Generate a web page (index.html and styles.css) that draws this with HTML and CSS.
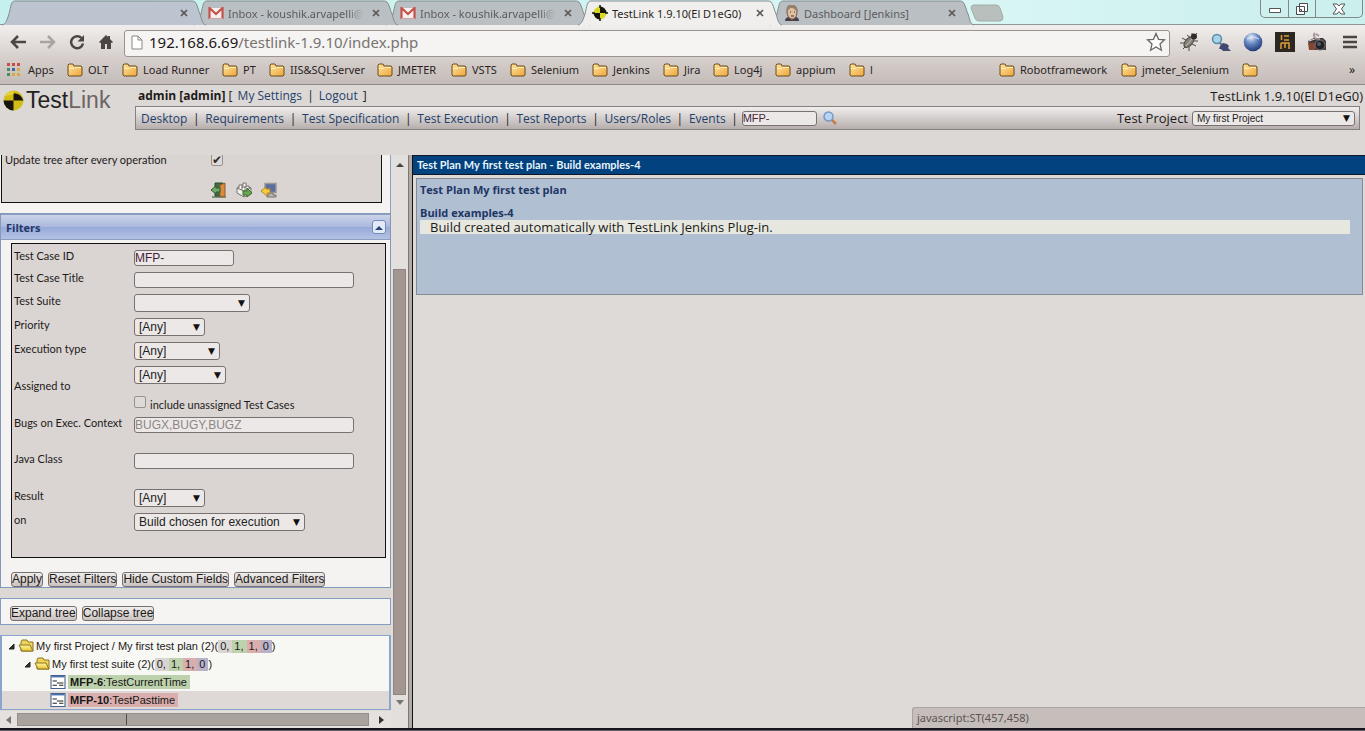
FILE: index.html
```html
<!DOCTYPE html>
<html lang="en">
<head>
<meta charset="utf-8">
<meta name="viewport" content="width=device-width, initial-scale=1">
<title>TestLink 1.9.10(El D1eG0)</title>
<link rel="stylesheet" href="styles.css">
</head>
<body>
<svg class="defs" width="0" height="0" aria-hidden="true">
  <defs>
    <linearGradient id="folderFill" x1="0" y1="0" x2="1" y2="1"><stop offset="0" stop-color="#ffe49a"/><stop offset="1" stop-color="#eea63c"/></linearGradient>
    <radialGradient id="globeFill" cx=".4" cy=".25" r=".8"><stop offset="0" stop-color="#e5effa"/><stop offset=".45" stop-color="#6687c0"/><stop offset="1" stop-color="#18306f"/></radialGradient>
    <linearGradient id="treeFill" x1="0" y1="0" x2="0" y2="1"><stop offset="0" stop-color="#fff5a0"/><stop offset="1" stop-color="#e8c52e"/></linearGradient>
    <symbol id="folder" viewBox="0 0 16 14"><path d="M1 12V2l1-1h4l1 2h7l1 1V12l-1 1H2z" fill="url(#folderFill)" stroke="#6b4a1d"/><path d="M2 5.500h5l1-1h6" stroke="#fff0bb" fill="none"/></symbol>
    <symbol id="tabshape" viewBox="0 0 204 26"><path d="M0 25C4 24 5 20 7 14C9 6 9 1 13 1H190C195 1 195 7 198 14C200 20 200 24 204 25"/></symbol>
    <symbol id="close" viewBox="0 0 8 8"><path d="M1 1l6 6M7 1L1 7" stroke="#5b5553" stroke-width="1.700" fill="none"/></symbol>
    <symbol id="mail" viewBox="0 0 16 12"><path d="M1 1h14v10H1z" fill="#f6efed"/><path d="M1.500 12V1L8 7l6.500-6v11" fill="none" stroke="#c5524a" stroke-width="2.200"/><path d="M1 11.500h14" stroke="#c9a5a0"/></symbol>
    <symbol id="favtarget" viewBox="0 0 16 16"><circle cx="8" cy="8" r="6.500" fill="#d8d91e"/><path d="M8 8V1.500A6.500 6.500 0 0 1 14.500 8zM8 8v6.500A6.500 6.500 0 0 1 1.500 8z" fill="#15130e"/><path d="M8 0v3M8 13v3M0 8h3M13 8h3" stroke="#15130e" stroke-width="1.500"/></symbol>
    <symbol id="logotarget" viewBox="0 0 20 20"><circle cx="10" cy="10" r="9.500" fill="#d2bd16"/><path d="M10 10H.5A9.500 9.500 0 0 0 10 19.500z" fill="#17140e"/><path d="M10 10V3q7 0 9.500 7z" fill="#17140e"/><path d="M10 1q-6 0-8 5l8-2z" fill="#e6d334"/></symbol>
    <symbol id="treefolder" viewBox="0 0 16 14"><path d="M3 12V3l1-2h5l1 2h5v9z" fill="#eed45b" stroke="#8c7422"/><path d="M1 6h11l3 6H4z" fill="url(#treeFill)" stroke="#8c7422"/></symbol>
    <symbol id="testcase" viewBox="0 0 14 13"><path d="M.5.5h13v12H.5z" fill="#fff" stroke="#45608f"/><path d="M1 1.500h12" stroke="#4c71ad" stroke-width="1.500"/><path d="M2 5.500h4M6 7.500h6M2 9.500h4M8 9.500h4" stroke="#222"/></symbol>
    <symbol id="expanded" viewBox="0 0 8 8"><path d="M7 2v5H2z" fill="#333" stroke="#222"/></symbol>
  </defs>
</svg>

<header class="browser">
  <div class="tabstrip">
    <div class="tab tab-1"><svg class="tab-bg"><use href="#tabshape"/></svg><span class="tab-title"></span><button class="tab-close" aria-label="Close tab"><svg><use href="#close"/></svg></button></div>
    <div class="tab tab-2"><svg class="tab-bg"><use href="#tabshape"/></svg><svg class="favicon mail"><use href="#mail"/></svg><span class="tab-title fade">Inbox - koushik.arvapelli@</span><button class="tab-close" aria-label="Close tab"><svg><use href="#close"/></svg></button></div>
    <div class="tab tab-3"><svg class="tab-bg"><use href="#tabshape"/></svg><svg class="favicon mail"><use href="#mail"/></svg><span class="tab-title fade">Inbox - koushik.arvapelli@</span><button class="tab-close" aria-label="Close tab"><svg><use href="#close"/></svg></button></div>
    <div class="tab tab-active"><svg class="tab-bg"><use href="#tabshape"/></svg><svg class="favicon"><use href="#favtarget"/></svg><span class="tab-title">TestLink 1.9.10(El D1eG0)</span><button class="tab-close" aria-label="Close tab"><svg><use href="#close"/></svg></button></div>
    <div class="tab tab-5"><svg class="tab-bg"><use href="#tabshape"/></svg><svg class="favicon" viewBox="0 0 16 16"><path d="M1 16c0-3 2-4 4-4l5-1c3 1 5 2 5 5z" fill="#45404a"/><path d="M5 11l3 4 3-4z" fill="#f0eeea"/><path d="M7 13l1 3 2-3z" fill="#a94437"/><path d="M3 6c0-8 10-8 10 0 0 7-3 8-5 8S3 12 3 6z" fill="#dfbea1" stroke="#70553e"/><path d="M3 7C1 0 6-1 9 1c3-1 5 2 4 5-2 0-2-3-5-3S5 5 3 7z" fill="#97816b"/><path d="M6 7h1M10 7h1M7 11h3" stroke="#443630"/></svg><span class="tab-title">Dashboard [Jenkins]</span><button class="tab-close" aria-label="Close tab"><svg><use href="#close"/></svg></button></div>
    <button class="newtab" aria-label="New tab"><svg viewBox="0 0 34 18"><path d="M1 4q0-3 3-3h22q3 0 4 3l3 9q0 4-3 4H9q-3 0-4-3z" fill="#b8bfbd" stroke="#a2aca9"/></svg></button>
    <div class="window-buttons">
      <button aria-label="Minimize"><svg width="14" height="10"><path d="M1.500 4.500h11v4h-11z" fill="#fff" stroke="#555"/></svg></button>
      <button aria-label="Restore"><svg width="14" height="14"><path d="M4.500 1.500h8v8h-8zM1.500 4.500h8v8h-8z" fill="#fff" stroke="#4c4c4c"/><path d="M4.500 7.500h2v2h-2z" fill="#ddd" stroke="#4c4c4c"/></svg></button>
      <button aria-label="Close"><svg width="14" height="12"><path d="M1 1h4l2 2 2-2h4L9.500 6l3.500 5H9L7 8.500 5 11H1l3.500-5z" fill="#fff" stroke="#555"/></svg></button>
    </div>
  </div>

  <div class="toolbar">
    <button class="nav-btn" aria-label="Back"><svg width="18" height="16"><path d="M17 8H3M9 2L3 8l6 6" fill="none" stroke="#4c4543" stroke-width="2.500"/></svg></button>
    <button class="nav-btn" aria-label="Forward"><svg width="18" height="16"><path d="M1 8h14M9 2l6 6-6 6" fill="none" stroke="#aaa3a0" stroke-width="2.500"/></svg></button>
    <button class="nav-btn" aria-label="Reload"><svg width="16" height="16"><path d="M12.500 4A6 6 0 1 0 14 9.500" fill="none" stroke="#4c4543" stroke-width="2.500"/><path d="M15 1v6.500H8.500z" fill="#4c4543"/></svg></button>
    <button class="nav-btn" aria-label="Home"><svg width="16" height="16"><path d="M8 1L1 8l1 1 1-.5V15h4v-5h2v5h4V8.500l1 .5 1-1-3-3V2h-2v1z" fill="#4c4543"/></svg></button>
    <div class="address">
      <svg class="page-icon" viewBox="0 0 12 15"><path d="M1 1h6l4 4v9H1zM7 1v4h4" fill="#fff" stroke="#8b8583"/></svg>
      <span class="url"><b>192.168.6.69</b>/testlink-1.9.10/index.php</span>
      <button class="star" aria-label="Bookmark this page"><svg width="20" height="20" viewBox="0 0 20 20"><path d="M10 1.500l2.500 5.800 6 .5-4.500 4.200 1.400 6.200L10 15l-5.400 3.200L6 12 1.500 7.800l6-.5z" fill="#fff" stroke="#6b6563" stroke-width="1.300"/></svg></button>
    </div>
    <div class="extensions">
      <button aria-label="Bug extension"><svg viewBox="0 0 20 20"><g stroke="#4e4946" fill="none"><path d="M7 8L3 6M6 11H1M7 14l-3 3M10 15v4M13 12l4 2M12 6L8 3M14 9l5 0M15 5l3-4M13 4V1"/></g><ellipse cx="10" cy="10" rx="3.500" ry="6.500" transform="rotate(42 10 10)" fill="#85817b" stroke="#4f4a45"/><circle cx="15" cy="4.500" r="3" fill="#302c2b"/><path d="M13 7l-6 7" stroke="#c4bfb8"/></svg></button>
      <button aria-label="Search extension"><svg viewBox="0 0 20 20"><path d="M8 10l4 4" stroke="#6d7189" stroke-width="2"/><circle cx="6" cy="7" r="4.500" fill="#a9d2e6" stroke="#568ba9" stroke-width="1.500"/><path d="M9 14l3-3 4 1 2 2-1 2 3 3h-8l-2-2H8z" fill="#414970"/></svg></button>
      <button aria-label="Globe extension"><svg viewBox="0 0 20 20"><circle cx="10" cy="10" r="9.300" fill="url(#globeFill)"/><path d="M4 7q6-4 12 0" stroke="#dce8f8" fill="none"/></svg></button>
      <button aria-label="Grid extension"><svg viewBox="0 0 20 20"><path d="M0 0h20v20H0z" fill="#2d2721"/><path d="M6.500 3v5M9 4h5M9 8h5M6 17v-6M6 11h8v6M10 11v5" stroke="#d99e36" stroke-width="1.500" fill="none"/></svg></button>
      <button aria-label="Camera extension"><svg viewBox="0 0 20 20"><path d="M8 1q-2 2 0 5M9 2l3 2" stroke="#a5999d" stroke-width="2" fill="none"/><path d="M1 9l6-3h9l3 3v9H3z" fill="#443b3c"/><path d="M1 11h7v7H2z" fill="#854731"/><circle cx="13" cy="13" r="5" fill="#222" stroke="#77717a"/><circle cx="12" cy="12" r="2" fill="#555b6b"/><path d="M2 9l6-2h5" stroke="#ddd3cf"/></svg></button>
      <button class="menu" aria-label="Menu"><svg viewBox="0 0 14 14"><path d="M0 2h14M0 7h14M0 12h14" stroke="#4c4543" stroke-width="2.600"/></svg></button>
    </div>
  </div>

  <nav class="bookmarks" aria-label="Bookmarks">
    <a href="#"><svg class="apps" viewBox="0 0 14 14"><path d="M0 0h3v3H0zM5 0h3v3H5zM10 0h3v3h-3z" fill="#c74c46"/><path d="M0 5h3v3H0z" fill="#448c65"/><path d="M5 5h3v3H5z" fill="#3f65ad"/><path d="M10 5h3v3h-3zM5 10h3v3H5z" fill="#dca83c"/><path d="M0 10h3v3H0z" fill="#448c65"/><path d="M10 10h3v3h-3z" fill="#dca83c"/></svg>Apps</a>
    <a href="#"><svg><use href="#folder"/></svg>OLT</a>
    <a href="#"><svg><use href="#folder"/></svg>Load Runner</a>
    <a href="#"><svg><use href="#folder"/></svg>PT</a>
    <a href="#"><svg><use href="#folder"/></svg>IIS&amp;SQLServer</a>
    <a href="#"><svg><use href="#folder"/></svg>JMETER</a>
    <a href="#"><svg><use href="#folder"/></svg>VSTS</a>
    <a href="#"><svg><use href="#folder"/></svg>Selenium</a>
    <a href="#"><svg><use href="#folder"/></svg>Jenkins</a>
    <a href="#"><svg><use href="#folder"/></svg>Jira</a>
    <a href="#"><svg><use href="#folder"/></svg>Log4j</a>
    <a href="#"><svg><use href="#folder"/></svg>appium</a>
    <a href="#"><svg><use href="#folder"/></svg>l</a>
    <a href="#"><svg><use href="#folder"/></svg>Robotframework</a>
    <a href="#"><svg><use href="#folder"/></svg>jmeter_Selenium</a>
    <a href="#" aria-label="Folder"><svg><use href="#folder"/></svg></a>
    <button class="more" aria-label="More bookmarks">»</button>
  </nav>
</header>

<section class="app-header">
  <a class="logo" href="#" aria-label="TestLink"><svg><use href="#logotarget"/></svg><span>Test<i>Link</i></span></a>
  <div class="header-main">
    <div class="user-row"><span><b>admin [admin]</b> [ <a href="#">My Settings</a> | <a href="#">Logout</a> ]</span><span class="version">TestLink 1.9.10(El D1eG0)</span></div>
    <div class="menu-row">
      <nav class="main-menu"><a href="#">Desktop</a><i>|</i><a href="#">Requirements</a><i>|</i><a href="#">Test Specification</a><i>|</i><a href="#">Test Execution</a><i>|</i><a href="#">Test Reports</a><i>|</i><a href="#">Users/Roles</a><i>|</i><a href="#">Events</a><i>|</i></nav>
      <input class="quick" type="text" value="MFP-" aria-label="Test case quick search">
      <button class="search" aria-label="Search"><svg viewBox="0 0 14 14"><path d="M8 8l5 5" stroke="#c77d49" stroke-width="2.500"/><circle cx="5.500" cy="5.500" r="4.500" fill="#b5d5f4" stroke="#7898c3" stroke-width="1.500"/></svg></button>
      <label class="project-label" for="project">Test Project</label>
      <span class="select project"><select id="project"><option>My first Project</option></select></span>
    </div>
  </div>
</section>

<main class="workspace">
  <div class="sidebar">
    <section class="settings">
      <div class="settings-box">
        <div class="update-row"><label for="update">Update tree after every operation</label><input id="update" type="checkbox" checked></div>
        <div class="tools">
          <button aria-label="Exit"><svg viewBox="0 0 16 16"><path d="M1 15h14M4 1h8v13H4z" fill="#426c45" stroke="#29482f"/><path d="M9 3l5-2v13l-5 1z" fill="#d98c40" stroke="#955b27"/><path d="M0 8l5-4v2h4v4H5v2z" fill="#73aa68" stroke="#305d32"/></svg></button>
          <button aria-label="Export plan"><svg viewBox="0 0 16 16"><path d="M1 6l5-3 9 3v6l-7 3-7-4z" fill="#f2f0ee" stroke="#77716d"/><path d="M1 6l7 3 7-3M8 9v6" fill="none" stroke="#77716d"/><path d="M3 6V3h3v3M7 4V1h3v3M10 6V4h3v2M6 8V5h3v3" fill="#fff" stroke="#77716d"/><path d="M7 9h4V6l5 5-5 4v-2H7z" fill="#69a64d" stroke="#376c2b"/></svg></button>
          <button aria-label="Import results"><svg viewBox="0 0 16 16"><path d="M4 1.500h11v9H4z" fill="#5c6e9d" stroke="#9a9896" stroke-width="1.500"/><path d="M8 11h4v2h3v2H6v-2h2z" fill="#b8b5b2" stroke="#77716d"/><path d="M0 9l5-4v2h4v4H6v3z" fill="#f3ce42" stroke="#b48724"/></svg></button>
        </div>
      </div>
    </section>

    <section class="filters">
      <div class="filters-head"><h2>Filters</h2><button aria-label="Collapse filters"><svg viewBox="0 0 8 5"><path d="M0 5l4-4 4 4z" fill="#25457e"/></svg></button></div>
      <form class="filters-body">
        <div class="fields">
          <div class="row"><label for="tcid">Test Case ID</label><input class="short" id="tcid" type="text" value="MFP-"></div>
          <div class="row"><label for="tctitle">Test Case Title</label><input id="tctitle" type="text"></div>
          <div class="row choice"><label for="suite">Test Suite</label><span class="select w-suite"><select id="suite"><option></option></select></span></div>
          <div class="row choice"><label for="priority">Priority</label><span class="select w-s"><select id="priority"><option>[Any]</option></select></span></div>
          <div class="row choice"><label for="exectype">Execution type</label><span class="select w-m"><select id="exectype"><option>[Any]</option></select></span></div>
          <div class="row assigned"><label for="assigned">Assigned to</label><div><span class="select w-l"><select id="assigned"><option>[Any]</option></select></span><div class="include"><input id="unassigned" type="checkbox"><label for="unassigned">include unassigned Test Cases</label></div></div></div>
          <div class="row tall"><label for="bugs">Bugs on Exec. Context</label><input id="bugs" type="text" placeholder="BUGX,BUGY,BUGZ"></div>
          <div class="row tall"><label for="java">Java Class</label><input id="java" type="text"></div>
          <div class="row choice"><label for="result">Result</label><span class="select w-s"><select id="result"><option>[Any]</option></select></span></div>
          <div class="row choice"><label for="on">on</label><span class="select w-xl"><select id="on"><option>Build chosen for execution</option></select></span></div>
        </div>
        <div class="actions"><button type="button">Apply</button><button type="button">Reset Filters</button><button type="button">Hide Custom Fields</button><button type="button">Advanced Filters</button></div>
      </form>
    </section>

    <section class="tree-tools"><button>Expand tree</button><button>Collapse tree</button></section>

    <ul class="tree">
      <li class="lvl-0"><svg class="twisty"><use href="#expanded"/></svg><svg class="node"><use href="#treefolder"/></svg><span>My first Project / My first test plan (2)(</span><span class="counts"><b>0,</b><b class="pass">1,</b><b class="fail">1,</b><b class="block">0</b></span><span>)</span></li>
      <li class="lvl-1"><svg class="twisty"><use href="#expanded"/></svg><svg class="node"><use href="#treefolder"/></svg><span>My first test suite (2)(</span><span class="counts"><b>0,</b><b class="pass">1,</b><b class="fail">1,</b><b class="block">0</b></span><span>)</span></li>
      <li class="lvl-2"><svg class="node"><use href="#testcase"/></svg><a class="case pass" href="#"><strong>MFP-6</strong>:TestCurrentTime</a></li>
      <li class="lvl-2 hovered"><svg class="node"><use href="#testcase"/></svg><a class="case fail" href="#"><strong>MFP-10</strong>:TestPasttime</a></li>
    </ul>

    <div class="hscroll" aria-hidden="true"><svg viewBox="0 0 5 8"><path d="M5 0v8L0 4z" fill="#777"/></svg><div class="htrack"><div class="hthumb"></div></div><svg viewBox="0 0 5 8"><path d="M0 0v8l5-4z" fill="#333"/></svg></div>
  </div>

  <div class="vscroll" aria-hidden="true"><svg viewBox="0 0 8 5"><path d="M0 5l4-4 4 4z" fill="#444"/></svg><div class="vthumb"></div><svg viewBox="0 0 8 5"><path d="M0 0h8L4 5z" fill="#777"/></svg></div>
  <div class="splitter"></div>

  <div class="content">
    <h1>Test Plan My first test plan - Build examples-4</h1>
    <article class="plan">
      <h2>Test Plan My first test plan</h2>
      <h2>Build examples-4</h2>
      <p>Build created automatically with TestLink Jenkins Plug-in.</p>
    </article>
    <div class="status">javascript:ST(457,458)</div>
  </div>
</main>
<footer class="taskbar"></footer>
</body>
</html>
```

FILE: styles.css
```css
* { box-sizing: border-box; }
html, body { height: 100%; }
body { margin: 0; display: flex; flex-direction: column; overflow: hidden; background: #dcd8d5; color: #1d1a19; font: 12px "Open Sans", "Noto Sans", sans-serif; }
button { margin: 0; padding: 0; border: 0; background: none; color: inherit; font: inherit; }
svg { display: block; flex: none; }
a { color: #243f6b; text-decoration: none; }
h1, h2, p, ul { margin: 0; padding: 0; }
.defs { position: absolute; }

/* Browser chrome */
.browser { flex: none; font: 12px "Noto Sans", "Open Sans", sans-serif; border-bottom: 1px solid #8f8a87; background: linear-gradient(#f0eeec 26px, #d4cdca 60px, #c4bcb9); }
.tabstrip { position: relative; z-index: 1; display: flex; height: 25px; padding-left: 2px; background: linear-gradient(90deg, #c5f0ed, #d9f6f4 70%, #caefec); border-bottom: 1px solid #8f9696; }
.tab { position: relative; flex: none; display: flex; align-items: center; width: 204px; height: 26px; margin-right: -12px; padding: 0 18px 0 14px; color: #5d5b5c; }
.tab-bg { position: absolute; inset: 0; width: 204px; height: 26px; fill: #b9bfc3; stroke: #858b8e; }
.tab-1 { z-index: 5; }
.tab-1 .tab-bg { fill: #bbc4cf; }
.tab-2 { z-index: 4; }
.tab-3 { z-index: 3; }
.tab-5 { z-index: 2; }
.tab-active { z-index: 6; color: #2a1f22; }
.tab-active .tab-bg { fill: #f1efee; }
.favicon { position: relative; width: 16px; height: 16px; margin-right: 4px; }
.mail { height: 12px; }
.tab-title { position: relative; flex: 1; min-width: 0; overflow: hidden; white-space: nowrap; font-size: 11px; }
.fade { -webkit-mask-image: linear-gradient(90deg, #000 88%, transparent); mask-image: linear-gradient(90deg, #000 88%, transparent); }
.tab-close { position: relative; margin-left: 8px; }
.tab-close svg { width: 8px; height: 8px; }
.newtab { margin: 4px 0 0 8px; align-self: flex-start; }
.newtab svg { width: 34px; height: 18px; }
.window-buttons { display: flex; height: 18px; margin: 0 2px 0 auto; border: 1px solid #7e8988; border-top: 0; border-radius: 0 0 5px 5px; }
.window-buttons button { display: grid; place-items: center; width: 27px; }
.window-buttons button + button { border-left: 1px solid #7e8988; }
.window-buttons button:last-child { width: 47px; }

.toolbar { display: flex; align-items: center; height: 34px; padding: 0 8px; }
.nav-btn { display: grid; place-items: center; width: 29px; height: 24px; }
.nav-btn:first-child { width: 20px; margin-right: 5px; }
.address { display: flex; flex: 1; align-items: center; height: 27px; margin: 2px 9px 0 4px; padding: 0 3px 2px 6px; border: 1px solid #9a9491; border-radius: 3px; background: #f5f4f3; }
.page-icon { width: 12px; height: 15px; margin-right: 6px; }
.url { flex: 1; font-size: 15px; color: #787371; white-space: nowrap; }
.url b { font-weight: 400; color: #1c1818; }
.extensions { display: flex; align-items: center; gap: 12px; }
.extensions svg { width: 20px; height: 20px; }
.extensions .menu { margin-left: 4px; }
.extensions .menu svg { width: 14px; height: 14px; }

.bookmarks { display: grid; grid-template-columns: 60px 55px 100px 47px 108px 74px 59px 82px 71px 50px 62px 74px 150px 122px 121px 90px 1fr; align-items: center; height: 25px; padding: 0 10px 4px 7px; }
.bookmarks a { display: flex; align-items: center; gap: 5px; color: #291f23; white-space: nowrap; font-size: 11px; }
.bookmarks svg { width: 16px; height: 14px; }
.bookmarks .apps { width: 14px; margin-right: 2px; }
.more { justify-self: end; }

/* Application header */
.app-header { flex: none; display: flex; height: 70px; background: #dcd8d5; }
.logo { display: flex; flex: none; align-items: center; align-self: flex-start; gap: 2px; width: 135px; height: 30px; padding-left: 3px; color: #252122; font: 23px "Liberation Sans", sans-serif; }
.logo svg { width: 21px; height: 21px; }
.logo i { font-style: normal; color: #6b6563; }
.header-main { flex: 1; min-width: 0; padding-right: 5px; }
.user-row { display: flex; justify-content: space-between; align-items: center; height: 21px; padding-left: 3px; margin-right: -3px; }
.user-row a { margin: 0 2px; }
.version { font-size: 13px; }
.menu-row { display: flex; align-items: center; height: 24px; padding: 0 4px 0 5px; border: 1px solid #858081; background: linear-gradient(#f0eeed, #b6aeac); }
.main-menu { display: flex; gap: 5px; white-space: nowrap; }
.main-menu i { width: 8px; text-align: center; font-style: normal; }
.quick { width: 75px; height: 15px; margin: 0 6px 0 3px; }
input[type=text].quick { font-size: 11px; }
.search svg { width: 14px; height: 14px; }
.project-label { margin: 0 4px 0 auto; font-size: 13px; }
input[type=text] { padding: 0; border: 1px solid #77716f; border-radius: 3px; background: #ebe8e7; color: #471f38; font: 12px "Liberation Sans", sans-serif; }
input::placeholder { color: #8d8785; }
.select { position: relative; display: block; }
.select::after { content: "▼"; position: absolute; right: 5px; top: 0; line-height: 18px; font-family: "DejaVu Sans", sans-serif; font-size: 9px; color: #111; pointer-events: none; }
select { display: block; width: 100%; height: 18px; appearance: none; margin: 0; padding: 0 4px; border: 1px solid #77716f; border-radius: 3px; background: #ebe8e7; color: #222; font: 12px "Liberation Sans", sans-serif; }
.project { width: 163px; }
.project select { height: 15px; font-size: 10px; }
.project.select::after { line-height: 14px; }
input[type=checkbox] { appearance: none; display: grid; place-items: center; flex: none; width: 12px; height: 12px; margin: 0; border: 1px solid #99918e; border-radius: 2px; background: #dedad8; }
input[type=checkbox]:checked::after { content: "✔"; font: 12px/10px "DejaVu Sans", sans-serif; color: #302c2b; }

/* Navigator */
.workspace { flex: 1; min-height: 0; display: grid; grid-template-columns: 391px 17px 4px minmax(0, 1fr); }
.sidebar { display: flex; flex-direction: column; min-height: 0; overflow: hidden; font: 11px "Lato", sans-serif; background: #dcd8d6; }
.settings { flex: none; padding: 0 8px 10px 1px; border-right: 1px solid #8ba1c4; background: #f4f3f1; }
.settings-box { height: 48px; border: 1px solid #111; border-top: 0; background: #dad5d3; }
.update-row { display: flex; align-items: center; height: 9px; padding-left: 3px; }
.update-row label { width: 206px; }
.tools { display: flex; gap: 9px; padding: 18px 0 0 209px; }
.tools svg { width: 16px; height: 16px; }
.filters { flex: none; border: 1px solid #8499b9; background: #f4f3f1; }
.filters-head { display: flex; justify-content: space-between; align-items: center; height: 26px; padding: 0 4px 0 5px; border-top: 1px solid #899fc2; border-bottom: 1px solid #899fc2; background: linear-gradient(#ccd4e9, #acb9de 48%, #98aada 52%, #b4c2e2); }
.filters-head h2 { color: #213769; font: bold 11px "Open Sans", sans-serif; }
.filters-head button { display: grid; place-items: center; width: 14px; height: 14px; border: 1px solid #738db9; border-radius: 3px; background: #e4eaf5; }
.filters-head svg { width: 8px; height: 5px; }
.filters-body { padding: 3px 4px 0 10px; }
.fields { height: 315px; padding: 6px 2px 0; border: 1px solid #111; background: #dad5d3; }
.row { display: flex; align-items: flex-start; height: 22px; line-height: 12px; }
.row > label { flex: none; width: 120px; white-space: nowrap; }
.row input[type=text] { width: 220px; height: 16px; }
.row input.short { width: 100px; }
.choice { height: 24px; }
.choice > label { padding-top: 1px; }
.assigned { height: 51px; }
.assigned > label { padding-top: 14px; }
.include { display: flex; gap: 4px; padding-top: 12px; }
.include label { padding-top: 3px; }
.tall { height: 36px; }
.w-suite { width: 116px; }
.w-s { width: 71px; }
.w-m { width: 86px; }
.w-l { width: 92px; }
.w-xl { width: 171px; }
.actions, .tree-tools { display: flex; gap: 5px; }
.actions { padding-top: 14px; }
.actions button, .tree-tools button { height: 15px; border: 1px solid #77706e; border-radius: 3px; background: linear-gradient(#f0eeed, #c9c2c0); font: 12px/13px "Liberation Sans", sans-serif; white-space: nowrap; }
.tree-tools { flex: none; height: 27px; margin-top: 10px; padding: 7px 9px 0; border: 1px solid #829cc2; background: #f5f4f2; }
.tree { flex: none; margin-top: 10px; padding: 1px 0 0; border: 2px solid #8ba4cc; border-width: 1px 2px; background: #f7f7f3; list-style: none; font: 11px "Liberation Sans", sans-serif; }
.tree li { display: flex; align-items: center; height: 18px; white-space: nowrap; }
.tree .lvl-0 { padding-left: 5px; }
.tree .lvl-1 { padding-left: 21px; }
.tree .lvl-2 { padding-left: 48px; }
.tree .hovered { background: #ded9d6; }
.twisty { width: 8px; height: 8px; margin-right: 3px; }
.node { width: 16px; height: 14px; margin-right: 2px; }
.tree a { color: #171717; }
.case { padding: 0 3px 0 2px; line-height: 14px; }
.counts { display: flex; line-height: 13px; }
.counts b { padding: 0 3px 0 2px; font-weight: 400; background: #d9d5d2; }
.counts .pass, .pass { background: #bdd2ac; }
.counts .fail, .fail { background: #d9aead; }
.counts .block { background: #b8b1c9; }
.hscroll { display: flex; align-items: center; gap: 6px; height: 17px; margin-top: auto; padding: 0 7px 0 6px; background: #e4e1df; }
.hscroll svg { width: 5px; height: 8px; }
.htrack { flex: 1; height: 13px; margin-right: 4px; background: #aaa29c; border: 1px solid #968e89; }
.hthumb { width: 31%; height: 11px; border-right: 1px solid #514c49; }
.vscroll { display: flex; flex-direction: column; align-items: center; padding: 7px 0 23px; background: #e2dfdd; }
.vscroll svg { width: 8px; height: 5px; }
.vthumb { width: 13px; flex: 0 0 426px; margin: auto 0 5px; background: #a3958f; border: 1px solid #8d8580; }
.splitter { background: #b4aaa5; border-left: 1px solid #7d7774; }

/* Work frame */
.content { position: relative; border-left: 1px solid #111; padding-right: 2px; background: #dedad7; }
.content h1 { height: 20px; margin-right: -2px; padding-left: 4px; border: 1px solid #101827; border-width: 1px 0; background: #02427f; color: #e7f4fa; font: bold 11px/18px "Lato", sans-serif; }
.plan { height: 117px; margin: 3px 0 0 3px; padding: 4px 12px 0 3px; border: 1px solid #858a94; background: #b1bfd3; }
.plan h2 { height: 14px; color: #203665; font: bold 11px/14px "Open Sans", sans-serif; }
.plan h2 + h2 { margin-top: 9px; }
.plan p { padding-left: 10px; background: #e6e8df; font-size: 13px; line-height: 14px; }
.status { position: absolute; right: 0; bottom: 0; width: 453px; height: 21px; padding-left: 4px; border: 1px solid #aaa29e; border-width: 1px 0 0 1px; border-radius: 3px 0 0; background: #c5beba; color: #5d5552; font: 11px/19px "Noto Sans", sans-serif; }
.taskbar { flex: none; height: 3px; background: #665f66; border-top: 2px solid #15131c; }
```
